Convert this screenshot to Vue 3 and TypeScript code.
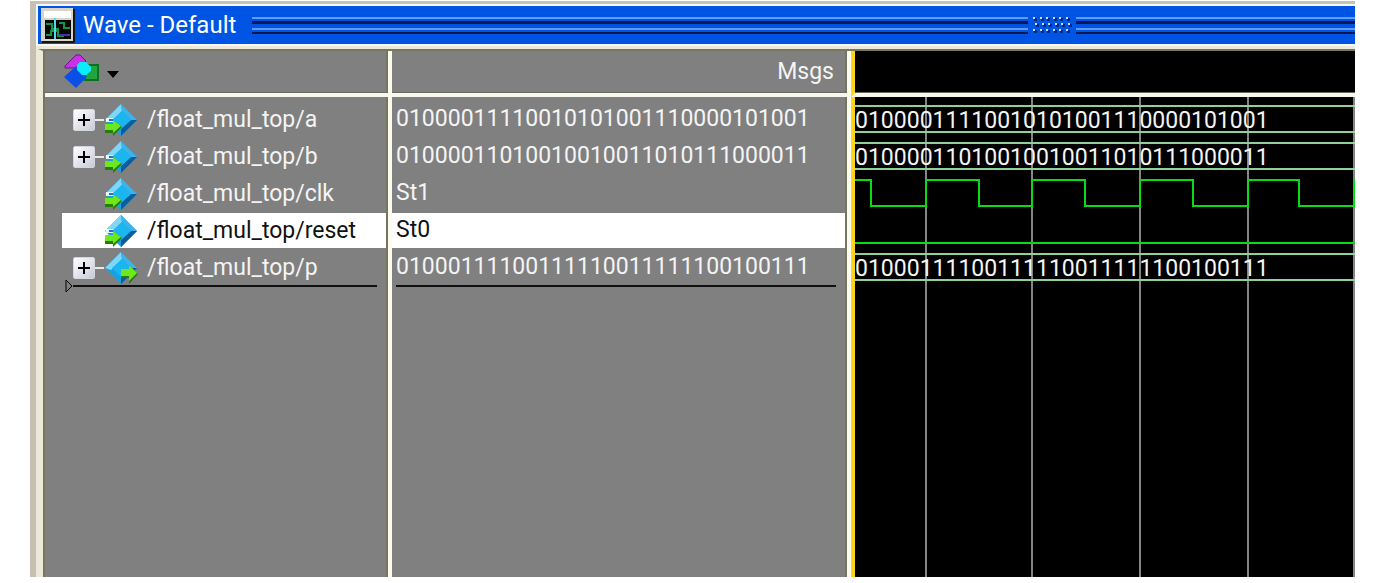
<script setup lang="ts">
interface Signal {
  name: string
  value: string
  kind: 'bus' | 'clock' | 'low'
  output?: boolean
  selected?: boolean
}

const signals: Signal[] = [
  { name: '/float_mul_top/a', value: '01000011110010101001110000101001', kind: 'bus' },
  { name: '/float_mul_top/b', value: '01000011010010010011010111000011', kind: 'bus' },
  { name: '/float_mul_top/clk', value: 'St1', kind: 'clock' },
  { name: '/float_mul_top/reset', value: 'St0', kind: 'low', selected: true },
  { name: '/float_mul_top/p', value: '01000111100111110011111100100111', kind: 'bus', output: true },
]

const rowHeight = 37
const topPad = 5
const edges = [71, 177, 285, 393, 499]
const falls = [16, 124, 230, 338, 444]

const laneTop = (i: number): number => topPad + i * rowHeight

function clockPath(y: number): string {
  let d = `M0 ${y + 4}`
  falls.forEach((x, i) => {
    d += `H${x}V${y + 30}H${edges[i]}V${y + 4}`
  })
  return d
}

const gripDots: { x: number; y: number }[] = []
for (let r = 0; r < 3; r++) {
  for (let c = 0; c < 6; c++) {
    gripDots.push({ x: 1 + c * 6 + Math.round(c / 2) + (r === 1 ? 2 : 0), y: 1 + r * 6 })
  }
}
</script>

<template>
  <main class="page">
    <section class="window" aria-label="Wave - Default">
      <header class="titlebar">
        <svg class="app-icon" width="34" height="35" viewBox="0 0 34 35" aria-hidden="true">
          <path d="M1 1H34V35H1z" fill="#161616" />
          <path d="M0 0H32V33H0z" fill="#d8d4ca" />
          <path d="M3 3H30V10H3z" fill="#fff" />
          <path d="M4 12H30V31H4z" fill="#050805" />
          <path d="M5 16H11V21H18M18 15H23V20H29M5 27H10V23H17V28H23" fill="none" stroke="#14934a" stroke-width="2" />
          <path d="M18 27H29" stroke="#4a2fb4" stroke-width="2" />
          <path d="M14 10V31" stroke="#55d8e8" stroke-width="2" />
        </svg>
        <h1 class="title">Wave - Default</h1>
        <span class="grip grip-long"></span>
        <svg class="dots" width="40" height="18" viewBox="0 0 40 18" aria-hidden="true">
          <g v-for="(p, i) in gripDots" :key="i">
            <rect :x="p.x + 1" :y="p.y + 1" width="3" height="3" fill="#002a8c" />
            <rect :x="p.x" :y="p.y" width="2" height="2" fill="#c4dcff" />
          </g>
        </svg>
        <span class="grip grip-short"></span>
      </header>

      <div class="panes">
        <div class="pane names">
          <div class="pane-head">
            <button class="menu-button" type="button" aria-label="Signal display options">
              <svg width="56" height="36" viewBox="0 0 56 36" aria-hidden="true">
                <path d="M21 12H34V27H21z" fill="#20a63c" stroke="#126d25" stroke-width="2" />
                <path d="M1 13L12 2H16L22 8L14 15H1z" fill="#c832e6" stroke="#6f1284" stroke-width="1" />
                <path d="M12 13L23 24L12 35L0 24z" fill="#0a50e8" />
                <path d="M16 9H22L27 14V18L22 22H18L13 17V12z" fill="#0cecff" />
                <path d="M43 18H55L49 25z" fill="#000" />
              </svg>
            </button>
          </div>
          <ul class="rows">
            <li v-for="s in signals" :key="s.name" class="row" :class="{ selected: s.selected }">
              <span class="toggle-cell">
                <button v-if="s.kind === 'bus'" class="toggle" type="button" :aria-label="'Expand ' + s.name">
                  <svg width="12" height="12" viewBox="0 0 12 12" aria-hidden="true">
                    <path d="M6 0V12M0 6H12" stroke="#000" stroke-width="2" />
                  </svg>
                </button>
                <span v-if="s.kind === 'bus'" class="connector"></span>
              </span>
              <svg class="signal-icon" width="34" height="34" viewBox="0 0 34 34" aria-hidden="true">
                <path d="M17 1L33 17L17 33L1 17z" fill="#16a2e0" />
                <path d="M17 1L1 17L7 19L18 8z" fill="#7fd6f8" />
                <path d="M17 1L33 17L27 17L18 8z" fill="#3ab4ea" />
                <path d="M33 17L17 33L17 26L27 17z" fill="#0b5c9c" />
                <path d="M18 8L27 17L17 26L8 17z" fill="#1bb6f0" />
                <template v-if="s.output">
                  <path d="M17 20H25V14L34 23L25 33V27H17z" fill="#287d08" />
                  <path d="M17 18H25V14L33 22L25 30V25H17z" fill="#6ce81c" />
                </template>
                <template v-else>
                  <path d="M2 15H9V19H2z" fill="#e6f8ff" />
                  <path d="M5 16H9V18H5z" fill="#1878b8" />
                  <path d="M1 22H9V17L18 24L9 33V30H1z" fill="#287d08" />
                  <path d="M1 21H9V17L17 23L9 30V27H1z" fill="#6ce81c" />
                </template>
              </svg>
              <span class="name">{{ s.name }}</span>
            </li>
          </ul>
          <div class="end-mark">
            <svg width="8" height="14" viewBox="0 0 8 14" aria-hidden="true">
              <path d="M1 1L7 7L1 13z" fill="none" stroke="#000" stroke-width="1" />
            </svg>
            <span class="end-line"></span>
          </div>
        </div>

        <div class="pane values">
          <div class="pane-head msgs">Msgs</div>
          <ul class="rows">
            <li v-for="s in signals" :key="s.name" class="row" :class="{ selected: s.selected }">{{ s.value }}</li>
          </ul>
          <div class="end-mark"><span class="end-line"></span></div>
        </div>

        <div class="pane wave">
          <div class="pane-head"></div>
          <svg class="plot" role="img" aria-label="Waveforms">
            <line v-for="x in edges" :key="x" :x1="x" :x2="x" y1="0" y2="100%" class="gridline" />
            <template v-for="(s, i) in signals" :key="s.name">
              <template v-if="s.kind === 'bus'">
                <line x1="0" x2="100%" :y1="laneTop(i) + 4" :y2="laneTop(i) + 4" class="bus" />
                <line x1="0" x2="100%" :y1="laneTop(i) + 30" :y2="laneTop(i) + 30" class="bus" />
                <text x="0" :y="laneTop(i) + 26" class="bits">{{ s.value }}</text>
              </template>
              <path v-else-if="s.kind === 'clock'" :d="clockPath(laneTop(i))" class="trace" />
              <line v-else x1="0" x2="100%" :y1="laneTop(i) + 30" :y2="laneTop(i) + 30" class="trace" />
            </template>
          </svg>
        </div>
      </div>
    </section>
  </main>
</template>

<style>
body {
  margin: 0;
  background: #fff;
}
</style>

<style scoped>
.page {
  box-sizing: border-box;
  height: 100vh;
  min-height: 360px;
  padding: 1px 18px 6px 30px;
  font-family: Roboto, "Liberation Sans", sans-serif;
  font-size: 23px;
  line-height: 34px;
  color: #f4f4f4;
}
.window {
  box-sizing: border-box;
  height: 100%;
  display: flex;
  flex-direction: column;
  border-top: 3px solid #c6c3b5;
  border-left: 6px solid #c6c0b2;
  background: #ece9d8;
  overflow: hidden;
}
.titlebar {
  display: flex;
  align-items: center;
  flex: none;
  height: 38px;
  border: solid #f8f8fa;
  border-width: 2px 0 2px 2px;
  background: #0054e3;
}
.app-icon {
  flex: none;
  margin-left: 3px;
}
.title {
  flex: none;
  margin: 0 16px 0 8px;
  font-size: 24px;
  font-weight: 400;
  color: #fff;
}
.grip {
  height: 17px;
  background: linear-gradient(
    #5c9cff 0 2px, #0054e3 2px 4px, #001650 4px 7px, #0054e3 7px 11px,
    #5c9cff 11px 13px, #0054e3 13px 15px, #001650 15px 17px
  );
}
.grip-long {
  flex: 776 1 0;
}
.grip-short {
  flex: 279 1 0;
}
.dots {
  flex: none;
  margin: 0 4px;
}
.panes {
  flex: 1;
  min-height: 0;
  display: grid;
  grid-template-columns: 349px 459px 1fr;
  margin: 3px 0 0 2px;
  border-left: 5px solid #ece9d8;
  border-top: 2px solid #77755f;
}
.pane {
  display: flex;
  flex-direction: column;
  min-width: 0;
  background: #808080;
}
.names,
.values {
  border-right: 4px solid #fbfbee;
  box-shadow: inset -2px 0 #77755f;
}
.names {
  border-left: 2px solid #77755f;
}
.pane-head {
  box-sizing: border-box;
  flex: none;
  height: 46px;
  border-bottom: 4px solid #f8f8ee;
  box-shadow: inset 0 -1px #6c6a60;
}
.msgs {
  padding: 4px 13px 0 0;
  text-align: right;
}
.menu-button {
  display: block;
  margin: 2px 0 0 19px;
  padding: 0;
  border: 0;
  background: none;
}
.menu-button svg,
.toggle svg {
  display: block;
}
.rows {
  margin: 0;
  padding: 5px 0 0;
  list-style: none;
}
.row {
  display: flex;
  height: 35px;
  margin: 0 2px 2px 0;
  white-space: nowrap;
}
.names .row {
  align-items: center;
  margin-left: 17px;
}
.values .row {
  padding-left: 4px;
}
.selected {
  background: #fff;
  color: #111;
}
.toggle-cell {
  display: flex;
  align-items: center;
  width: 42px;
  flex: none;
}
.toggle {
  display: grid;
  place-items: center;
  width: 22px;
  height: 22px;
  margin-left: 11px;
  padding: 0;
  border: 1px solid #d4d6de;
  border-radius: 2px;
  background: linear-gradient(135deg, #fff, #c8cad8);
}
.connector {
  flex: 1;
  height: 2px;
  background: #e8e8e8;
}
.signal-icon {
  flex: none;
}
.name {
  margin-left: 9px;
}
.end-mark {
  display: flex;
  align-items: center;
  height: 14px;
  margin: -8px 11px 0 20px;
}
.values .end-mark {
  margin-left: 4px;
}
.end-line {
  flex: 1;
  height: 2px;
  background: #101010;
}
.wave {
  background: #000;
}
.wave .pane-head {
  border-left: 4px solid #ffd51c;
}
.plot {
  flex: 1;
  min-height: 0;
  width: 100%;
  box-sizing: border-box;
  border-left: 4px solid #ffd51c;
}
.gridline {
  stroke: #858585;
  stroke-width: 2;
}
.bus {
  stroke: #8ed29a;
  stroke-width: 2;
}
.bits {
  fill: #f4f4f4;
}
.trace {
  fill: none;
  stroke: #08dc14;
  stroke-width: 2;
}
</style>
